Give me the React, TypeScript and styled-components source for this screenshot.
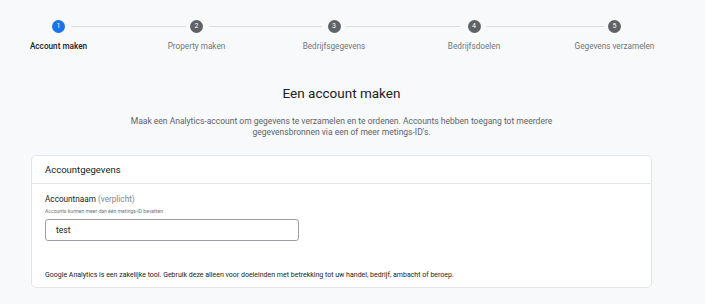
import React from 'react'
import styled, { createGlobalStyle } from 'styled-components'

const GlobalStyle = createGlobalStyle`
  html, body {
    margin: 0;
    padding: 0;
    background: #f8f9fa;
    font-family: Roboto, "Liberation Sans", Arial, sans-serif;
    color: #202124;
  }
`

const Page = styled.div`
  width: 683px;
  padding-top: 20px;
  overflow: hidden;
`

const Stepper = styled.div`
  display: grid;
  grid-template-columns: 139px 137px 138px 142px 139px;
  margin-left: -11px;
`

const Step = styled.div<{ $last?: boolean }>`
  position: relative;
  display: flex;
  flex-direction: column;
  align-items: center;

  &::after {
    content: '';
    display: ${(p) => (p.$last ? 'none' : 'block')};
    position: absolute;
    top: 6px;
    left: calc(50% + 12px);
    right: calc(-50% + 12px);
    height: 1px;
    background: #dadce0;
  }
`

const Circle = styled.div<{ $active?: boolean }>`
  width: 13px;
  height: 13px;
  border-radius: 50%;
  background: ${(p) => (p.$active ? '#1a73e8' : '#5f6368')};
  color: #fff;
  font-size: 7px;
  line-height: 13px;
  text-align: center;
`

const StepLabel = styled.div<{ $active?: boolean }>`
  margin-top: 8px;
  font-size: 8.2px;
  line-height: 11px;
  white-space: nowrap;
  color: ${(p) => (p.$active ? '#202124' : '#70757a')};
  font-weight: ${(p) => (p.$active ? 500 : 400)};
`

const Title = styled.h1`
  margin: 33px 0 0;
  font-size: 13.5px;
  line-height: 16px;
  font-weight: 400;
  text-align: center;
  color: #202124;
`

const Description = styled.p`
  width: 440px;
  margin: 15px auto 0;
  font-size: 8.5px;
  line-height: 11px;
  text-align: center;
  color: #5f6368;
`

const Card = styled.section`
  margin: 17px 31px 0;
  background: #fff;
  border: 1px solid #e3e5e8;
  border-radius: 5px;
`

const CardHeader = styled.div`
  height: 27px;
  display: flex;
  align-items: center;
  padding: 0 13px;
  border-bottom: 1px solid #e3e5e8;
  font-size: 9.5px;
  color: #202124;
`

const CardBody = styled.div`
  padding: 10px 13px 7px;
`

const FieldLabel = styled.div`
  font-size: 8.2px;
  line-height: 11px;
  color: #202124;
`

const Optional = styled.span`
  color: #80868b;
`

const Helper = styled.div`
  margin-top: 2px;
  font-size: 5.1px;
  line-height: 8px;
  color: #70757a;
`

const Input = styled.input`
  display: block;
  box-sizing: border-box;
  width: 254px;
  height: 22px;
  margin-top: 4px;
  padding: 0 10px;
  border: 1px solid #9aa0a6;
  border-radius: 3px;
  font-family: inherit;
  font-size: 8.5px;
  color: #202124;
  background: #fff;
  outline: none;
`

const Notice = styled.div`
  margin-top: 29px;
  font-size: 7px;
  line-height: 10px;
  color: #202124;
`

const steps = ['Account maken', 'Property maken', 'Bedrijfsgegevens', 'Bedrijfsdoelen', 'Gegevens verzamelen']

export default function App() {
  return (
    <>
      <GlobalStyle />
      <Page>
        <Stepper>
          {steps.map((label, i) => (
            <Step key={label} $last={i === steps.length - 1}>
              <Circle $active={i === 0}>{i + 1}</Circle>
              <StepLabel $active={i === 0}>{label}</StepLabel>
            </Step>
          ))}
        </Stepper>
        <Title>Een account maken</Title>
        <Description>
          Maak een Analytics-account om gegevens te verzamelen en te ordenen. Accounts hebben toegang tot meerdere
          gegevensbronnen via een of meer metings-ID's.
        </Description>
        <Card>
          <CardHeader>Accountgegevens</CardHeader>
          <CardBody>
            <FieldLabel>
              Accountnaam <Optional>(verplicht)</Optional>
            </FieldLabel>
            <Helper>Accounts kunnen meer dan één metings-ID bevatten.</Helper>
            <Input defaultValue="test" />
            <Notice>
              Google Analytics is een zakelijke tool. Gebruik deze alleen voor doeleinden met betrekking tot uw handel,
              bedrijf, ambacht of beroep.
            </Notice>
          </CardBody>
        </Card>
      </Page>
    </>
  )
}
